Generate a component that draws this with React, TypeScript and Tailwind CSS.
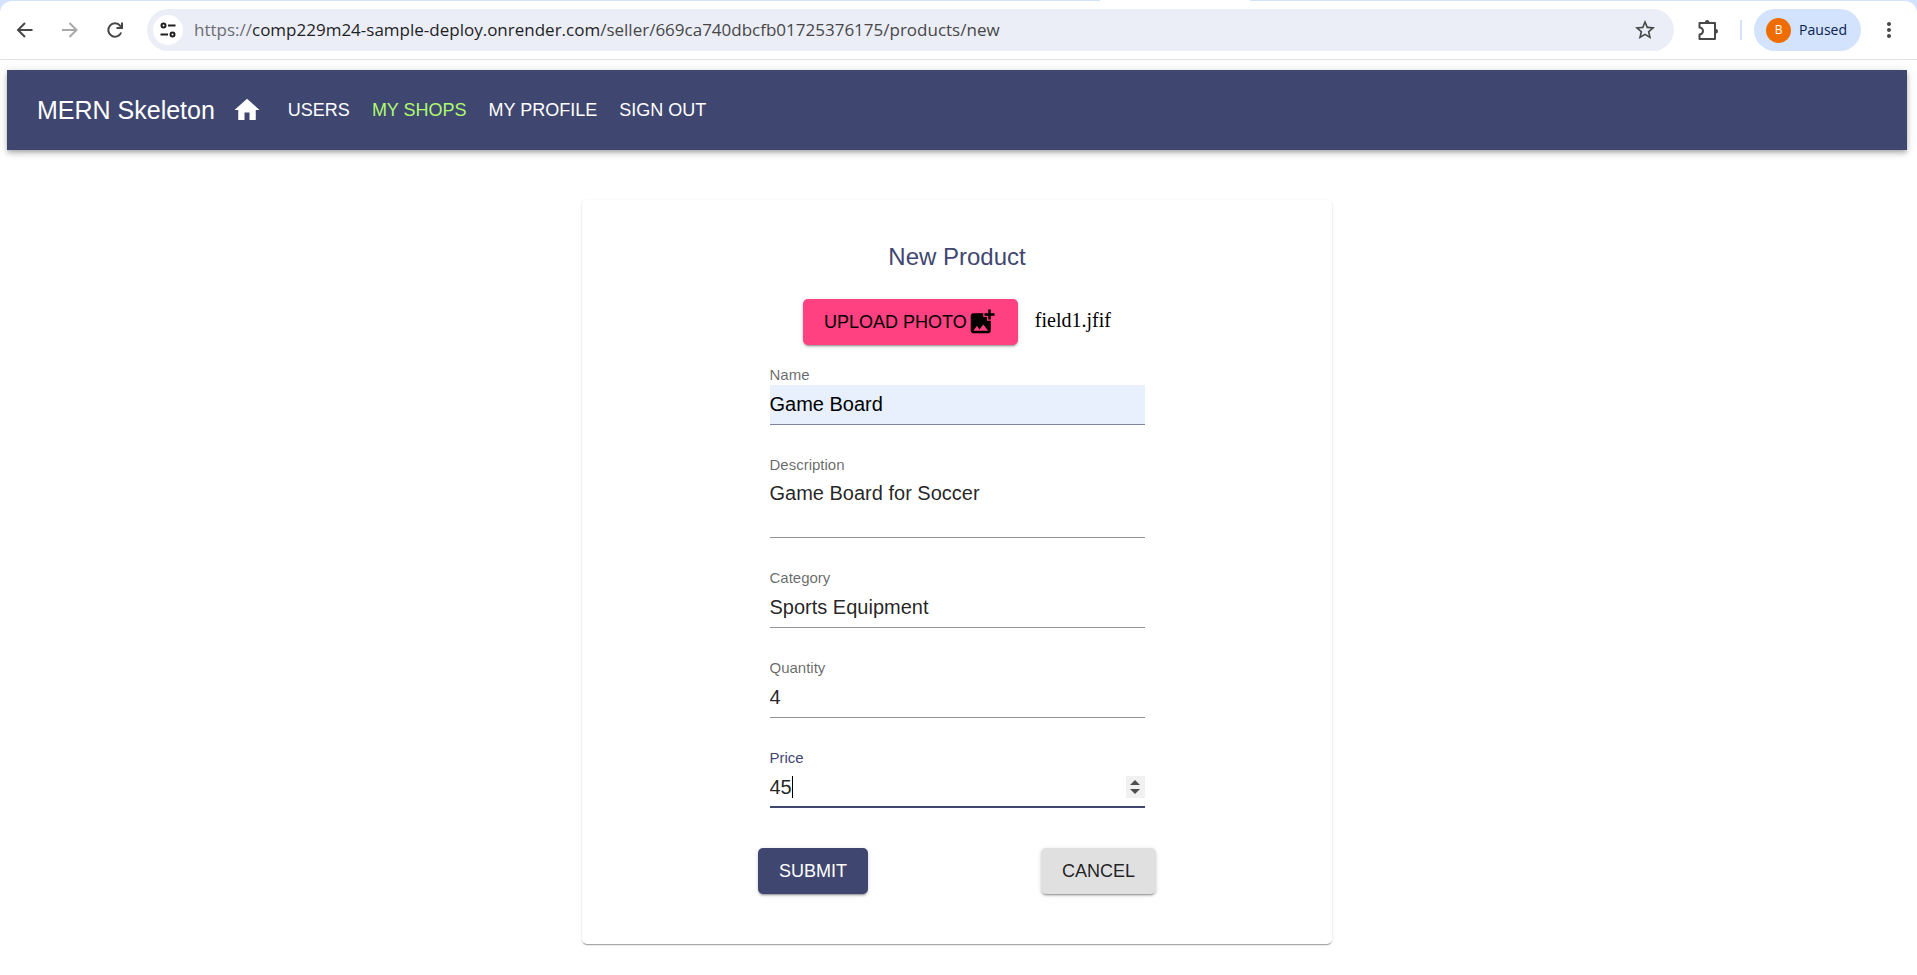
import { useState } from "react";
import type { ReactNode } from "react";
import { MdAddPhotoAlternate, MdHome, MdMoreVert, MdStarBorder } from "react-icons/md";

const raised =
  "shadow-[0_3px_1px_-2px_rgba(0,0,0,0.2),0_2px_2px_0_rgba(0,0,0,0.14),0_1px_5px_0_rgba(0,0,0,0.12)]";

function BrowserBar() {
  return (
    <header className="bg-[#d3e3fd] font-['Open_Sans',sans-serif]">
      <div className="flex h-px justify-center pl-[433px]">
        <span className="w-[150px] bg-white" />
      </div>
      <div className="flex h-[59px] items-center rounded-t-xl border-b border-[#dfe1e5] bg-white pr-4 text-[#474747]">
        <div className="flex w-[147px] shrink-0 items-center gap-[21px] pl-[13px]">
          <button type="button" aria-label="Back" className="flex size-6 items-center justify-center">
            <svg viewBox="0 0 24 24" className="size-6" fill="none" stroke="#474747" strokeWidth="2">
              <path d="M19.500 12H6M12 5L5 12L12 19" />
            </svg>
          </button>
          <button type="button" aria-label="Forward" className="flex size-6 items-center justify-center">
            <svg viewBox="0 0 24 24" className="size-6" fill="none" stroke="#a8a8a8" strokeWidth="2">
              <path d="M4 12H18M11.500 5L18.500 12L11.500 19" />
            </svg>
          </button>
          <button type="button" aria-label="Reload" className="flex size-6 items-center justify-center">
            <svg viewBox="0 0 24 24" className="size-6" fill="none" stroke="#474747" strokeWidth="2">
              <path d="M18.200 14.500A6.700 6.700 0 1 1 17.200 7.800L18.800 9.600M19 4.500V10H13.500" />
            </svg>
          </button>
        </div>
        <div className="flex h-[42px] min-w-0 flex-1 items-center rounded-full bg-[#ebeef7] pr-[17px] pl-[6px]">
          <button
            type="button"
            aria-label="View site information"
            className="flex size-[30px] shrink-0 items-center justify-center rounded-full bg-white"
          >
            <svg viewBox="0 0 16 16" className="size-4" fill="none" stroke="#1f1f1f" strokeWidth="2">
              <circle cx="3.500" cy="3.500" r="2" />
              <path d="M8 3.500H15.500M0.500 12.500H8" />
              <circle cx="12.500" cy="12.500" r="2" />
            </svg>
          </button>
          <div className="ml-[11px] min-w-0 flex-1 truncate text-[17px] leading-6 text-[#474747]">
            <span className="text-[#6b6d73]">https://</span>
            <span className="text-[#1f1f1f]">comp229m24-sample-deploy.onrender.com</span>
            <span>/seller/669ca740dbcfb01725376175/products/new</span>
          </div>
          <button type="button" aria-label="Bookmark this tab">
            <MdStarBorder className="size-6" />
          </button>
        </div>
        <button type="button" aria-label="Extensions" className="ml-[22px]">
          <svg viewBox="0 0 24 24" className="size-6" fill="none" stroke="#474747" strokeWidth="2" strokeLinejoin="round">
            <path d="M3.500 5H19V21H3.500V16.500A3.400 3.400 0 0 0 3.500 9.500Z" />
            <path d="M9 4a2.200 2 0 0 1 4.400 0ZM20 11a2 2.200 0 0 1 0 4.400Z" fill="#474747" stroke="none" />
          </svg>
        </button>
        <span className="ml-5 h-5 w-[2px] bg-[#d3e3fd]" />
        <button
          type="button"
          className="ml-3 flex h-[42px] items-center gap-2 rounded-full bg-[#d3e3fd] pr-[14px] pl-3 text-sm text-[#062150]"
        >
          <span className="flex size-[25px] items-center justify-center rounded-full bg-[#ef6c00] text-xs text-white">
            B
          </span>
          Paused
        </button>
        <button type="button" aria-label="Menu" className="ml-4 text-[#474747]">
          <MdMoreVert className="size-6" />
        </button>
      </div>
    </header>
  );
}

function NavBar() {
  return (
    <nav className="mt-[10px] mr-[10px] ml-[7px] flex h-20 items-center bg-[#3f4771] px-[30px] text-white shadow-[0_2px_4px_-1px_rgba(0,0,0,0.2),0_4px_5px_0_rgba(0,0,0,0.14),0_1px_10px_0_rgba(0,0,0,0.12)]">
      <span className="text-[25px] leading-10">MERN Skeleton</span>
      <a href="#home" aria-label="Home" className="ml-[17px]">
        <MdHome className="size-[30px]" />
      </a>
      <div className="ml-[26px] flex gap-[22px] text-lg">
        <a href="#users">USERS</a>
        <a href="#shops" className="text-[#aef96f]">
          MY SHOPS
        </a>
        <a href="#profile">MY PROFILE</a>
        <a href="#signout">SIGN OUT</a>
      </div>
    </nav>
  );
}

const control = "block w-full border-b border-[#949494] bg-transparent text-xl text-black/87 outline-none";

function Field({ id, label, active, children }: { id: string; label: string; active?: boolean; children: ReactNode }) {
  return (
    <div>
      <label
        htmlFor={id}
        className={active ? "block text-[15px] leading-5 text-[#3f4771]" : "block text-[15px] leading-5 text-black/60"}
      >
        {label}
      </label>
      {children}
    </div>
  );
}

function ProductForm() {
  const [name, setName] = useState("Game Board");
  const [description, setDescription] = useState("Game Board for Soccer");
  const [category, setCategory] = useState("Sports Equipment");
  const [quantity, setQuantity] = useState("4");
  const [price, setPrice] = useState("45");
  const [editing, setEditing] = useState(true);
  const step = (by: number) => setPrice(String(Number(price) + by));
  const noSpin =
    "[appearance:textfield] [&::-webkit-inner-spin-button]:appearance-none [&::-webkit-outer-spin-button]:appearance-none";

  return (
    <form
      onSubmit={(e) => e.preventDefault()}
      className="w-full max-w-[750px] rounded-[5px] bg-white pt-[37px] pb-[50px] shadow-[0_2px_1px_-1px_rgba(0,0,0,0.2),0_1px_1px_0_rgba(0,0,0,0.14),0_1px_3px_0_rgba(0,0,0,0.12)]"
    >
      <h1 className="text-center text-2xl leading-10 text-[#3f4771]">New Product</h1>
      <div className="mt-[22px] flex items-center justify-center gap-[17px]">
        <button
          type="button"
          className={`flex h-[46px] items-center rounded-[5px] bg-[#ff4081] px-[21px] text-lg text-black ${raised}`}
        >
          UPLOAD PHOTO
          <MdAddPhotoAlternate className="size-[30px]" />
        </button>
        <span className="pb-1 font-['Liberation_Serif',serif] text-xl text-black">field1.jfif</span>
      </div>
      <div className="mx-auto mt-5 flex w-1/2 flex-col gap-[30px]">
        <Field id="name" label="Name">
          <input
            id="name"
            value={name}
            onChange={(e) => setName(e.target.value)}
            className="block h-10 w-full border-b border-[#7f869b] bg-[#e8f0fe] text-xl text-black outline-none"
          />
        </Field>
        <Field id="description" label="Description">
          <textarea
            id="description"
            rows={2}
            value={description}
            onChange={(e) => setDescription(e.target.value)}
            className={`h-[63px] resize-none pt-1 leading-7 ${control}`}
          />
        </Field>
        <Field id="category" label="Category">
          <input
            id="category"
            value={category}
            onChange={(e) => setCategory(e.target.value)}
            className={`h-10 ${control}`}
          />
        </Field>
        <Field id="quantity" label="Quantity">
          <input
            id="quantity"
            type="number"
            value={quantity}
            onChange={(e) => setQuantity(e.target.value)}
            className={`h-10 ${noSpin} ${control}`}
          />
        </Field>
        <Field id="price" label="Price" active>
          <div className="relative">
            <input
              id="price"
              type="number"
              value={price}
              onFocus={() => setEditing(false)}
              onChange={(e) => setPrice(e.target.value)}
              className={`block h-10 w-full border-b-2 border-[#3f4771] bg-transparent text-xl text-black/87 outline-none ${noSpin}`}
            />
            {editing && <span className="absolute top-2 left-[22px] h-[22px] w-px bg-black" />}
            <div className="absolute top-2 right-0 flex h-[22px] w-[19px] flex-col bg-[#f1f1f1]">
              <button
                type="button"
                aria-label="Increase price"
                onClick={() => step(1)}
                className="flex flex-1 items-end justify-center pb-[2px]"
              >
                <svg viewBox="0 0 10 5" className="h-[5px] w-[10px]" fill="#505050">
                  <path d="M5 0L10 5H0Z" />
                </svg>
              </button>
              <button
                type="button"
                aria-label="Decrease price"
                onClick={() => step(-1)}
                className="flex flex-1 items-start justify-center pt-[2px]"
              >
                <svg viewBox="0 0 10 5" className="h-[5px] w-[10px]" fill="#505050">
                  <path d="M0 0H10L5 5Z" />
                </svg>
              </button>
            </div>
          </div>
        </Field>
      </div>
      <div className="mx-auto mt-10 flex w-[398px] justify-between text-lg">
        <button type="submit" className={`h-[46px] rounded-[5px] bg-[#3f4771] px-[21px] text-white ${raised}`}>
          SUBMIT
        </button>
        <button type="button" className={`h-[46px] rounded-[5px] bg-[#e0e0e0] px-[21px] text-black/87 ${raised}`}>
          CANCEL
        </button>
      </div>
    </form>
  );
}

export default function App() {
  return (
    <div className="min-h-screen bg-white font-['Liberation_Sans',Arial,sans-serif]">
      <BrowserBar />
      <NavBar />
      <main className="mt-[50px] mr-[10px] mb-5 ml-[7px] flex justify-center">
        <ProductForm />
      </main>
    </div>
  );
}
